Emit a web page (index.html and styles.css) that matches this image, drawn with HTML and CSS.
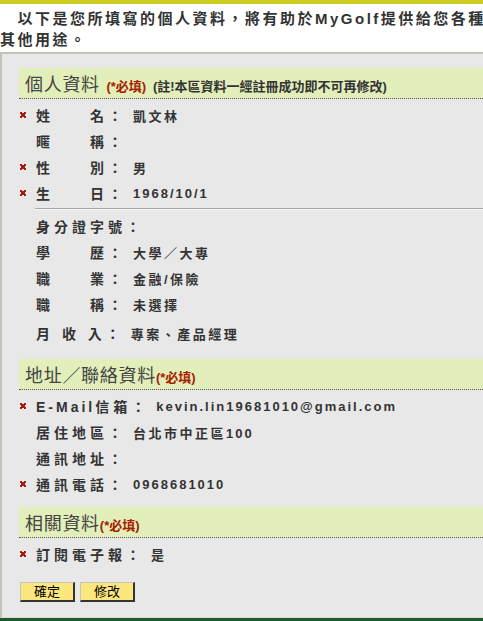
FILE: index.html
```html
<!DOCTYPE html>
<html lang="zh-Hant">
<head>
<meta charset="utf-8">
<title>個人資料</title>
<link rel="stylesheet" href="styles.css">
</head>
<body>
<div class="page">
  <div class="topbar"></div>
  <p class="intro">　以下是您所填寫的個人資料，將有助於MyGolf提供給您各種服務，絕不會移作<br>其他用途。</p>

  <div class="panel">
    <section class="sec sec1">
      <h2 class="sec-head"><span class="title">個人資料</span> <span class="req">(*必填)</span> <span class="note">(註!本區資料一經註冊成功即不可再修改)</span></h2>
      <div class="rows">
        <div class="row"><span class="star"><svg viewBox="0 0 6 6" width="6" height="6"><path d="M0 0h2v1h2V0h2v2H5v2h1v2H4V5H2v1H0V4h1V2H0z" fill="#a51b12"/></svg></span><span class="lbl">姓　　名：</span><span class="val">凱文林</span></div>
        <div class="row"><span class="star"></span><span class="lbl">暱　　稱：</span><span class="val"></span></div>
        <div class="row"><span class="star"><svg viewBox="0 0 6 6" width="6" height="6"><path d="M0 0h2v1h2V0h2v2H5v2h1v2H4V5H2v1H0V4h1V2H0z" fill="#a51b12"/></svg></span><span class="lbl">性　　別：</span><span class="val">男</span></div>
        <div class="row"><span class="star"><svg viewBox="0 0 6 6" width="6" height="6"><path d="M0 0h2v1h2V0h2v2H5v2h1v2H4V5H2v1H0V4h1V2H0z" fill="#a51b12"/></svg></span><span class="lbl">生　　日：</span><span class="val num">1968/10/1</span></div>
        <hr class="sep">
        <div class="row"><span class="star"></span><span class="lbl">身分證字號：</span><span class="val"></span></div>
        <div class="row"><span class="star"></span><span class="lbl">學　　歷：</span><span class="val">大學／大專</span></div>
        <div class="row"><span class="star"></span><span class="lbl">職　　業：</span><span class="val">金融/保險</span></div>
        <div class="row"><span class="star"></span><span class="lbl">職　　稱：</span><span class="val">未選擇</span></div>
        <div class="row row-tall"><span class="star"></span><span class="lbl">月 收 入：</span><span class="val">專案、產品經理</span></div>
      </div>
    </section>

    <section class="sec sec2">
      <h2 class="sec-head"><span class="title">地址／聯絡資料</span><span class="req">(*必填)</span></h2>
      <div class="rows">
        <div class="row"><span class="star"><svg viewBox="0 0 6 6" width="6" height="6"><path d="M0 0h2v1h2V0h2v2H5v2h1v2H4V5H2v1H0V4h1V2H0z" fill="#a51b12"/></svg></span><span class="lbl"><span class="latin">E-Mail</span>信箱：</span><span class="val num">kevin.lin19681010@gmail.com</span></div>
        <div class="row"><span class="star"></span><span class="lbl">居住地區：</span><span class="val">台北市中正區<span class="num">100</span></span></div>
        <div class="row"><span class="star"></span><span class="lbl">通訊地址：</span><span class="val"></span></div>
        <div class="row"><span class="star"><svg viewBox="0 0 6 6" width="6" height="6"><path d="M0 0h2v1h2V0h2v2H5v2h1v2H4V5H2v1H0V4h1V2H0z" fill="#a51b12"/></svg></span><span class="lbl">通訊電話：</span><span class="val num">0968681010</span></div>
      </div>
    </section>

    <section class="sec sec3">
      <h2 class="sec-head"><span class="title">相關資料</span><span class="req">(*必填)</span></h2>
      <div class="rows">
        <div class="row"><span class="star"><svg viewBox="0 0 6 6" width="6" height="6"><path d="M0 0h2v1h2V0h2v2H5v2h1v2H4V5H2v1H0V4h1V2H0z" fill="#a51b12"/></svg></span><span class="lbl">訂閱電子報：</span><span class="val">是</span></div>
      </div>
    </section>

    <div class="actions">
      <button class="btn" type="button">確定</button>
      <button class="btn" type="button">修改</button>
    </div>
  </div>
  <div class="footer-line"></div>
</div>
</body>
</html>
```

FILE: styles.css
```css
html, body {
  margin: 0;
  padding: 0;
  background: #ffffff;
  overflow: hidden;
}

.page {
  width: 483px;
  overflow: hidden;
  font-family: "Liberation Sans", "Noto Sans CJK TC", sans-serif;
  color: #333333;
}

.topbar {
  height: 4px;
  background: #cccc22;
}

.intro {
  margin: 0;
  padding: 4px 0 2px 0;
  font-size: 15px;
  line-height: 21px;
  font-weight: bold;
  letter-spacing: 2.5px;
  white-space: nowrap;
  color: #333333;
}

.panel {
  background: #e8e8e8;
  border-top: 2px solid #c6c2ba;
  border-left: 2px solid #c6c2ba;
  border-bottom: 1px solid #dcdcdc;
  padding: 14px 0 15px 17px;
}

.sec.sec2 {
  margin-top: 12px;
}

.sec.sec3 {
  margin-top: 10px;
}

.sec-head {
  margin: 0;
  height: 30px;
  line-height: 30px;
  background: #e2efbb;
  border-bottom: 1px dotted #555555;
  padding-left: 6px;
  font-weight: normal;
  white-space: nowrap;
}

.title {
  font-size: 18px;
  letter-spacing: 0.7px;
  color: #444444;
  font-weight: normal;
}

.req {
  font-size: 13px;
  font-weight: bold;
  color: #a52000;
}

.note {
  font-size: 13px;
  font-weight: bold;
  color: #333333;
}

.rows {
  padding-top: 3px;
  display: flex;
  flex-direction: column;
}

.row {
  height: 26px;
  display: flex;
  align-items: center;
  padding-left: 1px;
  white-space: nowrap;
}

.row-tall {
  height: 30px;
  padding-top: 2px;
  box-sizing: border-box;
}

.star {
  width: 16px;
  flex: 0 0 16px;
  display: flex;
  align-items: center;
}

.star svg {
  display: block;
}

.lbl {
  font-size: 14px;
  font-weight: bold;
  letter-spacing: 4px;
  color: #333333;
}

.latin {
  letter-spacing: 3px;
}

.val {
  margin-left: 7px;
  font-size: 13px;
  font-weight: bold;
  letter-spacing: 2.5px;
  color: #333333;
}

.val.num,
.val .num {
  letter-spacing: 2px;
}

.sep {
  margin: 2px 0 3px 16px;
  height: 0;
  border: 0;
  border-top: 1px solid #a6a6a6;
  border-bottom: 1px solid #f6f6f6;
}

.actions {
  margin-top: 15px;
  padding-left: 1px;
  display: flex;
  gap: 5px;
}

.btn {
  width: 55px;
  height: 20px;
  padding: 0;
  background: #fce77f;
  border-top: 1px solid #c4c4c4;
  border-left: 1px solid #c4c4c4;
  border-right: 2px solid #333333;
  border-bottom: 2px solid #333333;
  font-family: "Liberation Sans", "Noto Sans CJK TC", sans-serif;
  font-size: 13px;
  line-height: 16px;
  color: #000000;
  cursor: pointer;
}

.footer-line {
  height: 3px;
  background: #1f5a2e;
}
```
